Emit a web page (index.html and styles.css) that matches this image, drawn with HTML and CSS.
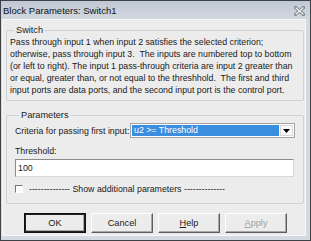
FILE: index.html
```html
<!DOCTYPE html>
<html lang="en">

<head>
  <meta charset="UTF-8">
  <title>Block Parameters: Switch1</title>
  <link rel="stylesheet" href="styles.css">
</head>

<body>
  <div class="window">
    <div class="titlebar">
      <span class="title">Block Parameters: Switch1</span>
      <span class="close">
        <svg width="11" height="10" viewBox="0 0 11 10">
          <path d="M1.5 1.5 L9.5 8.5 M9.5 1.5 L1.5 8.5" stroke="#7a8088" stroke-width="3" stroke-linecap="square" />
          <path d="M1.5 1.5 L9.5 8.5 M9.5 1.5 L1.5 8.5" stroke="#f4f6f8" stroke-width="1.2" />
        </svg>
      </span>
    </div>

    <div class="client">
      <fieldset class="group">
        <legend>Switch</legend>
        <p class="desc">
          Pass through input 1 when input 2 satisfies the selected criterion;<br>
          otherwise, pass through input 3.&nbsp; The inputs are numbered top to bottom<br>
          (or left to right). The input 1 pass-through criteria are input 2 greater than<br>
          or equal, greater than, or not equal to the threshhold.&nbsp; The first and third<br>
          input ports are data ports, and the second input port is the control port.
        </p>
      </fieldset>

      <fieldset class="group params">
        <legend>Parameters</legend>
        <div class="criteria-row">
          <label>Criteria for passing first input:</label>
          <div class="select">
            <span class="select-value">u2 &gt;= Threshold</span>
            <span class="select-arrow">
              <svg width="7" height="4" viewBox="0 0 7 4"><path d="M0 0 H7 L3.5 4 Z" fill="#000" /></svg>
            </span>
          </div>
        </div>
        <label class="field-label">Threshold:</label>
        <div class="edit">100</div>
        <div class="check-row">
          <span class="checkbox"></span>
          <span>-------------- Show additional parameters --------------</span>
        </div>
      </fieldset>

      <div class="buttons">
        <button class="btn default">OK</button>
        <button class="btn">Cancel</button>
        <button class="btn"><u>H</u>elp</button>
        <button class="btn disabled"><u>A</u>pply</button>
      </div>
    </div>
  </div>
</body>

</html>
```

FILE: styles.css
```css
:root {
  --frame: #d3d9e1;
  --face: #ececec;
  --text: #1a1a1a;
  --group-line: #cdd2d6;
  --select-blue: #3a8ee0;
}

* {
  margin: 0;
  padding: 0;
  box-sizing: border-box;
}

body {
  font-family: 'Liberation Sans', Arial, sans-serif;
  font-size: 8.8px;
  color: var(--text);
  background: #fff;
}

.window {
  width: 311px;
  height: 241px;
  border: 1px solid #3e4146;
  background: var(--frame);
  display: flex;
  flex-direction: column;
}

.titlebar {
  height: 18px;
  display: flex;
  align-items: center;
  justify-content: space-between;
  padding: 1px 4px 0 2px;
  background: linear-gradient(#c0c8d3, #d2d8e0);
}

.title {
  font-size: 9.5px;
  color: #111;
}

.close {
  display: flex;
  align-items: center;
  justify-content: center;
  width: 13px;
  height: 12px;
}

.client {
  flex: 1;
  margin: 0 4px 4px 1px;
  background: var(--face);
  border: 1px solid #f6f6f6;
  padding: 4px 0 0;
}

.group {
  border: 1px solid var(--group-line);
  border-radius: 2px;
  margin: 0 0 0 3px;
  width: 298px;
  padding: 0 3px 4px 3px;
}

.group legend {
  padding: 0 2px;
  margin-left: 4px;
  line-height: 12px;
  font-size: 9.2px;
}

.desc {
  line-height: 12px;
  white-space: nowrap;
}

.params {
  margin-top: 8px;
  padding: 2px 8px 8px 8px;
}

.criteria-row {
  display: flex;
  align-items: center;
  justify-content: space-between;
  height: 15px;
  white-space: nowrap;
}

.select {
  width: 165px;
  height: 15px;
  display: flex;
  border: 1px solid #a4a4a4;
  background: #fff;
  padding: 1px;
}

.select-value {
  flex: 1;
  background: var(--select-blue);
  color: #fff;
  line-height: 11px;
  padding-left: 2px;
}

.select-arrow {
  width: 13px;
  margin-left: 1px;
  display: flex;
  align-items: center;
  justify-content: center;
  border: 1px solid #d6d6d6;
  background: #fafafa;
}

.field-label {
  display: block;
  margin-top: 7px;
  line-height: 12px;
}

.edit {
  margin-top: 2px;
  height: 18px;
  width: 279px;
  border: 1px solid #8c8c8c;
  border-right-color: #d8d8d8;
  border-bottom-color: #d8d8d8;
  background: #fff;
  padding: 0 2px;
  line-height: 16px;
}

.check-row {
  margin-top: 6px;
  display: flex;
  align-items: center;
  gap: 6px;
  height: 12px;
  color: #222;
}

.checkbox {
  width: 8px;
  height: 8px;
  border-top: 1px solid #777;
  border-left: 1px solid #777;
  border-right: 1px solid #fff;
  border-bottom: 1px solid #fff;
  background: #fff;
}

.buttons {
  display: flex;
  gap: 5px;
  margin-top: 9px;
  padding-left: 21px;
}

.btn {
  width: 62px;
  height: 20px;
  font: inherit;
  font-size: 9.2px;
  color: var(--text);
  background: var(--face);
  border: 1px solid;
  border-color: #fff #5e5e5e #5e5e5e #fff;
  box-shadow: inset -1px -1px 0 #a8a8a8;
}

.btn u {
  text-decoration: underline;
}

.btn.default {
  outline: 1px solid #111;
  outline-offset: -1px;
  border-width: 2px;
  border-color: #222;
}

.btn.disabled {
  color: #a2a2a2;
}
```
